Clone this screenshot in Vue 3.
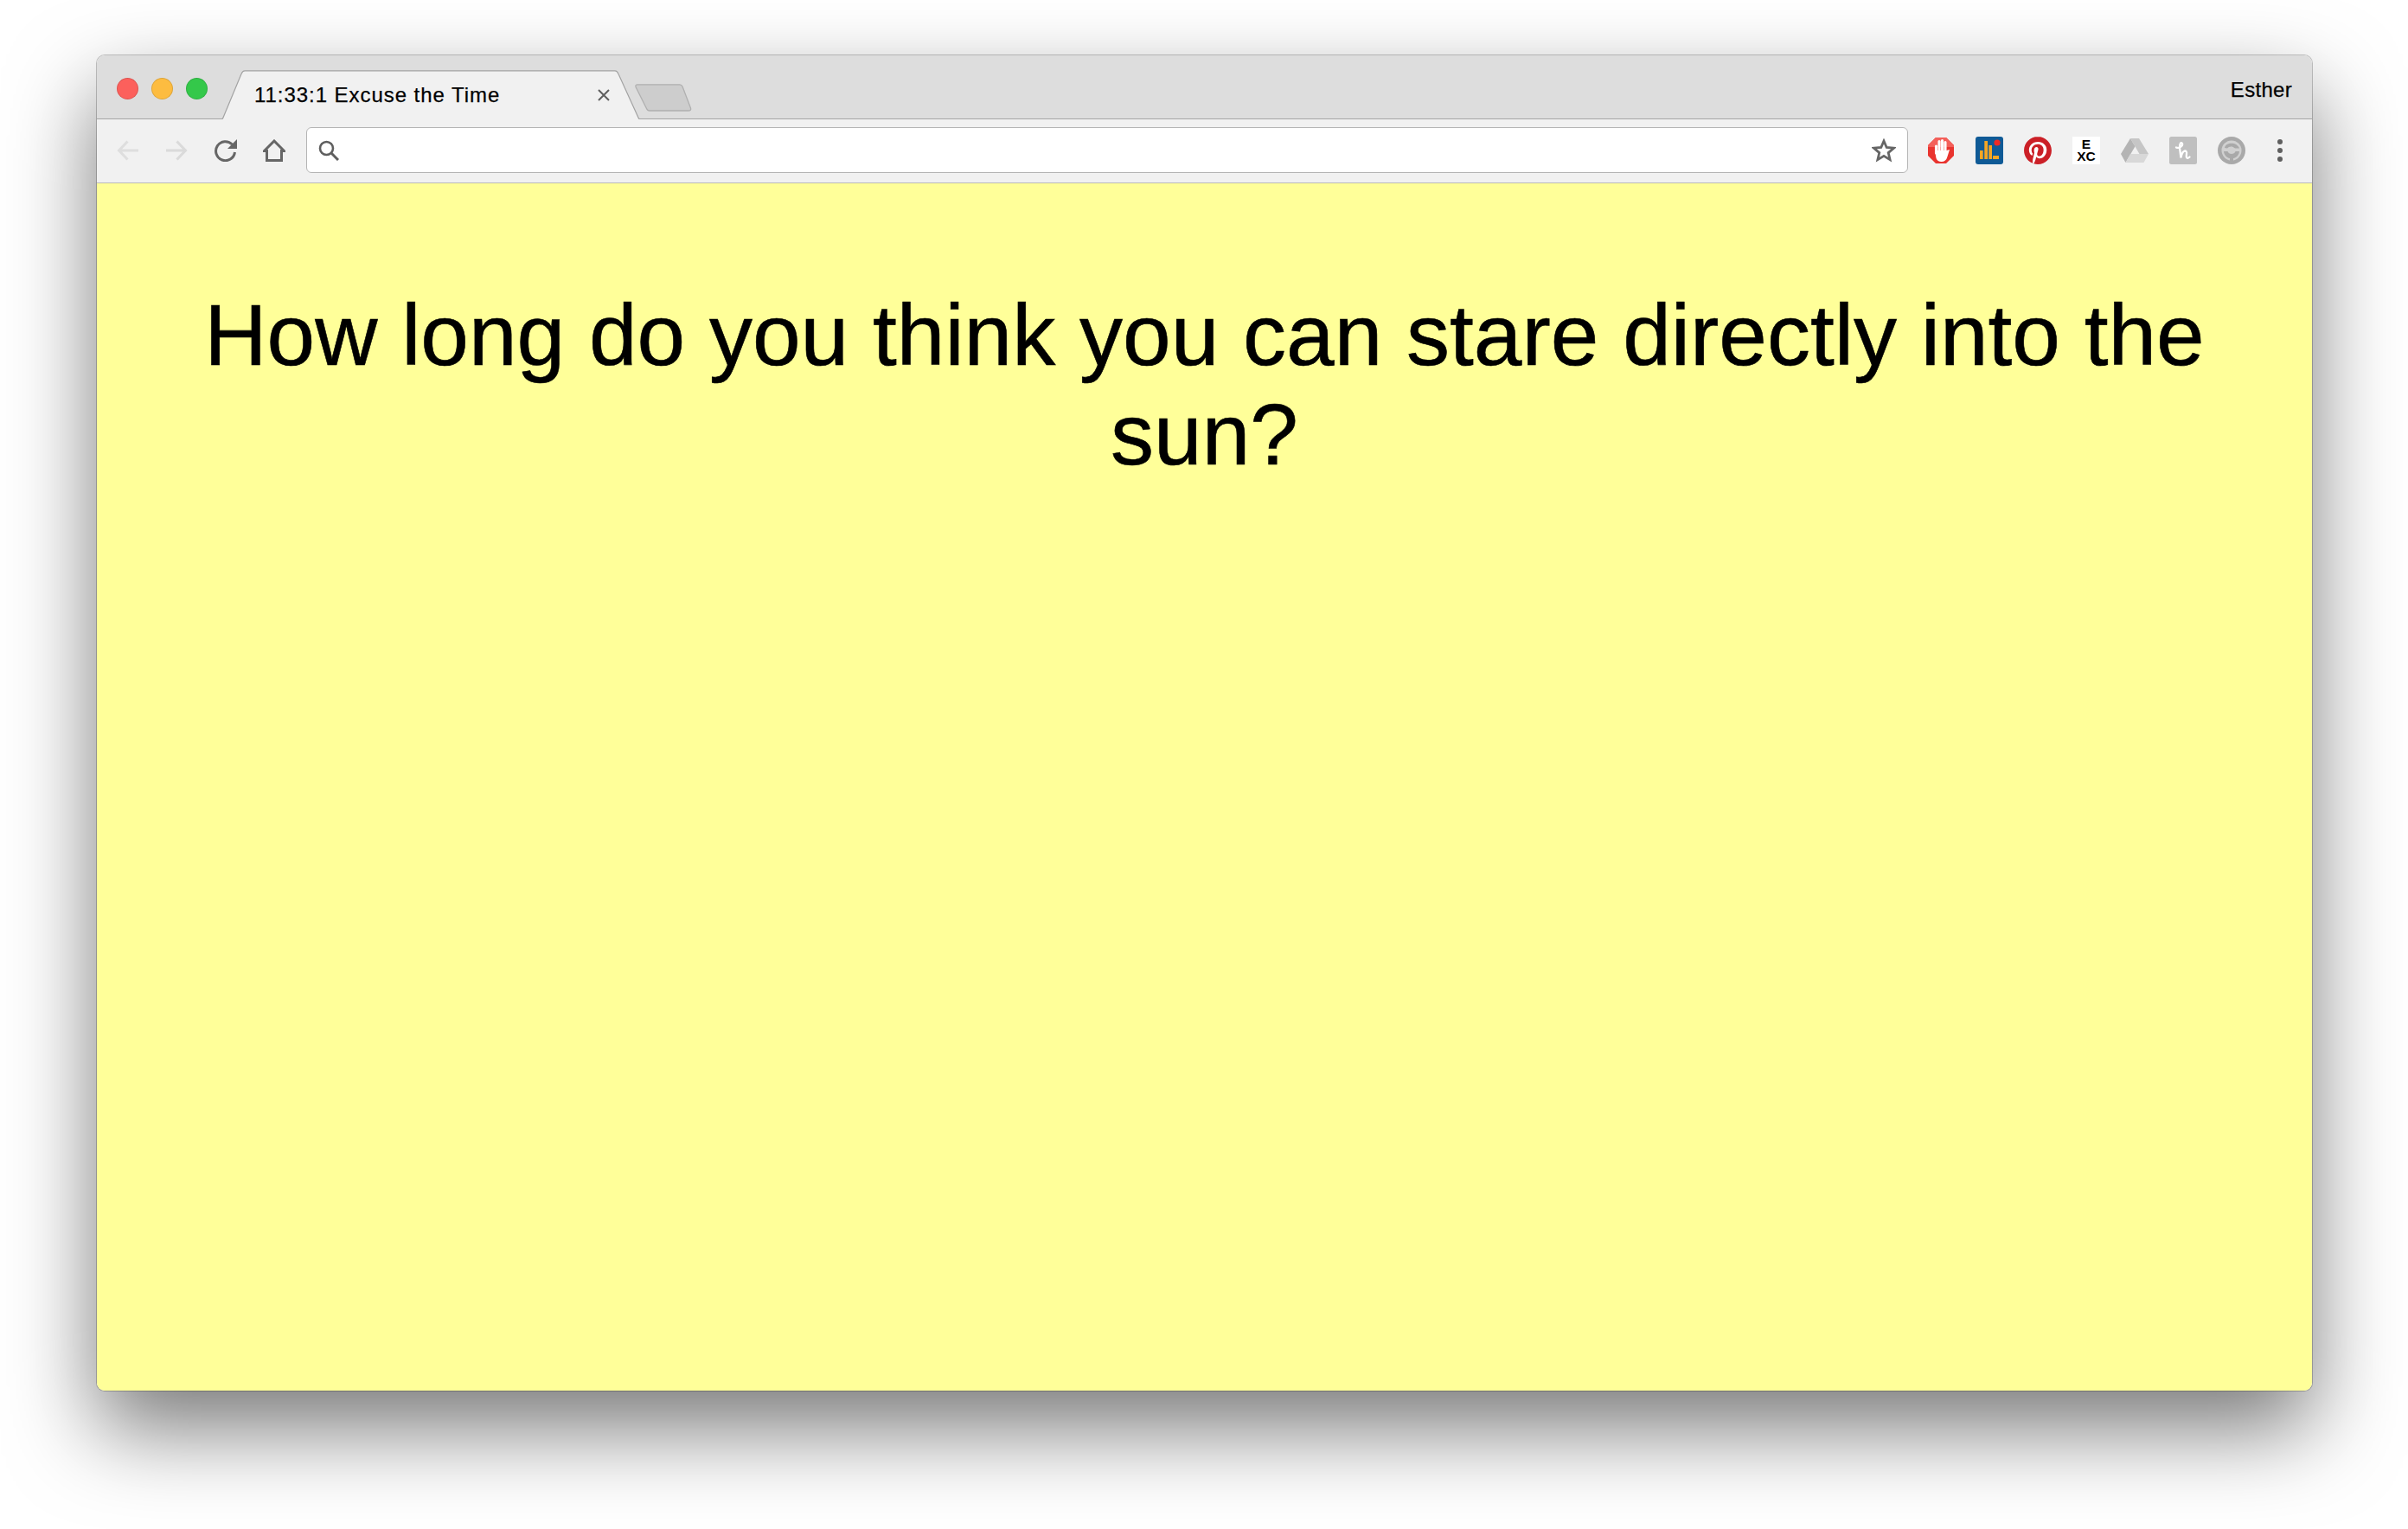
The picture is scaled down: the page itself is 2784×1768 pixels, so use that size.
<script setup>
const title = '11:33:1 Excuse the Time'
const question = 'How long do you think you can stare directly into the sun?'
</script>

<template>
  <div class="stage">
    <div class="window">
      <div class="strip">
        <div class="lights">
          <span class="light red"></span>
          <span class="light amber"></span>
          <span class="light green"></span>
        </div>
        <div class="tab">
          <svg class="tab-shape" width="484" height="57" viewBox="0 0 484 57">
            <path d="M0 56.500 H.5 Q1.500 56.500 2 55 L23 4.500 Q24.500 .8 27 .8 H455 Q457.500 .8 459 4.500 L482 55 Q482.500 56.500 483.500 56.500 H484 V57 H0 Z" fill="#f1f1f1" />
            <path d="M0 56.500 H.5 Q1.500 56.500 2 55 L23 4.500 Q24.500 .8 27 .8 H455 Q457.500 .8 459 4.500 L482 55 Q482.500 56.500 483.500 56.500 H484" fill="none" stroke="#a3a3a3" stroke-width="1.200" />
          </svg>
          <span class="tab-title">{{ title }}</span>
          <svg class="tab-close" width="16" height="14" viewBox="0 0 16 14">
            <path d="M2 1 L14 13 M14 1 L2 13" stroke="#5f5f5f" stroke-width="2" fill="none" />
          </svg>
        </div>
        <svg class="new-tab" width="66" height="32" viewBox="0 0 66 32">
          <path d="M3 .8 H52 Q54 .8 55 3 L64.500 28 Q65.300 31 62 31 H17 Q14.500 31 13.500 28.500 L1 3.500 Q.5 .8 3 .8 Z" fill="#cdcdcd" stroke="#b0b0b0" stroke-width="1.300" />
        </svg>
        <span class="profile">Esther</span>
      </div>

      <div class="toolbar">
        <svg class="nav" width="26" height="26" viewBox="0 0 26 26">
          <path d="M25 13 H3 M12.500 2.500 L2.500 13 L12.500 23.500" stroke="#dedede" stroke-width="3" fill="none" />
        </svg>
        <svg class="nav" width="26" height="26" viewBox="0 0 26 26">
          <path d="M1 13 H23 M13.500 2.500 L23.500 13 L13.500 23.500" stroke="#dadada" stroke-width="3" fill="none" />
        </svg>
        <svg class="nav" width="27" height="26" viewBox="0 0 27 26">
          <path d="M21.500 6 A11 11 0 1 0 24.500 15" stroke="#666" stroke-width="3" fill="none" />
          <path d="M27 0 V11 H16 Z" fill="#666" />
        </svg>
        <svg class="nav" width="26" height="26" viewBox="0 0 26 26">
          <path d="M1.500 13.500 L13 2 L24.500 13.500 H21.500 V24.500 H4.500 V13.500 Z" stroke="#666" stroke-width="3" fill="none" stroke-linejoin="miter" />
        </svg>

        <div class="omnibox">
          <svg width="24" height="24" viewBox="0 0 24 24">
            <circle cx="9.500" cy="9.500" r="7.500" stroke="#5f5f5f" stroke-width="2.600" fill="none" />
            <path d="M15 15 L23 23" stroke="#5f5f5f" stroke-width="3" fill="none" />
          </svg>
          <svg width="28" height="28" viewBox="0 0 28 28">
            <path d="M14 3 L17.200 10.500 L25.500 11.200 L19.200 16.600 L21.100 24.700 L14 20.400 L6.900 24.700 L8.800 16.600 L2.500 11.200 L10.800 10.500 Z" stroke="#666" stroke-width="2.800" fill="none" />
          </svg>
        </div>

        <div class="extensions">
          <svg width="32" height="32" viewBox="0 0 32 32">
            <path d="M10 1 H22 L31 10 V22 L22 31 H10 L1 22 V10 Z" fill="#e9342f" />
            <path d="M10 1 H22 L31 10 V12 H1 V10 Z" fill="#f4605a" />
            <path d="M10.500 11 V19 M14 5.500 V17 M17.500 4.500 V17 M21 6.500 V18" stroke="#fff" stroke-width="3.100" stroke-linecap="round" fill="none" />
            <path d="M9 16 H22.500 L26 15 L23.500 23 Q22 29 16.500 29 Q12 29 10.500 25 Z" fill="#fff" />
          </svg>
          <svg width="32" height="32" viewBox="0 0 32 32">
            <rect width="32" height="32" rx="3" fill="#0f5a96" />
            <path d="M5 16 H8.700 V26 H5 Z M10.300 5 H14 V26 H10.300 Z M15.300 10 H19 V26 H15.300 Z M20 22 H27 V26 H20 Z" fill="#f5a623" />
            <circle cx="25" cy="7" r="3.600" fill="#ee2a24" />
          </svg>
          <svg width="32" height="32" viewBox="0 0 24 24">
            <circle cx="12" cy="12" r="11.500" fill="#fff" />
            <path d="M12.017 0C5.396 0 .029 5.367.029 11.987c0 5.079 3.158 9.417 7.618 11.162-.105-.949-.199-2.403.041-3.439.219-.937 1.406-5.957 1.406-5.957s-.359-.72-.359-1.781c0-1.663.967-2.911 2.168-2.911 1.024 0 1.518.769 1.518 1.688 0 1.029-.653 2.567-.992 3.992-.285 1.193.6 2.165 1.775 2.165 2.128 0 3.768-2.245 3.768-5.487 0-2.861-2.063-4.869-5.008-4.869-3.41 0-5.409 2.562-5.409 5.199 0 1.033.394 2.143.889 2.741.099.12.112.225.085.345-.09.375-.293 1.199-.334 1.363-.053.225-.172.271-.401.165-1.495-.69-2.433-2.878-2.433-4.646 0-3.776 2.748-7.252 7.92-7.252 4.158 0 7.392 2.967 7.392 6.923 0 4.135-2.607 7.462-6.233 7.462-1.214 0-2.354-.629-2.758-1.379l-.749 2.848c-.269 1.045-1.004 2.352-1.498 3.146 1.123.345 2.306.535 3.55.535 6.607 0 11.985-5.365 11.985-11.987C23.97 5.39 18.592.026 11.985.026L12.017 0z" fill="#cb2027" />
          </svg>
          <div class="exc"><span>E</span><span>XC</span></div>
          <svg width="32" height="32" viewBox="0 -2 32 32">
            <path d="M11 0 L0 18 L5.500 28 L16.500 9.300 Z" fill="#b4b4b4" />
            <path d="M11 0 H21 L32 18 H21.500 Z" fill="#c6c6c6" />
            <path d="M11 18 H32 L26.500 28 H5.500 Z" fill="#d8d8d8" />
          </svg>
          <svg width="32" height="32" viewBox="0 0 32 32">
            <rect width="32" height="32" rx="2.500" fill="#bfbfbf" />
            <path d="M8 12.500 C11.500 14 16 10.500 15 8 C14 6 11.500 7.500 12 13 L13.500 24.500 C14 19 17 15 19.500 17 C21.200 18.500 19 22 20 24 C20.600 25.300 22 25 23.500 23.500" stroke="#fff" stroke-width="2.300" fill="none" stroke-linecap="round" />
          </svg>
          <svg width="32" height="32" viewBox="0 0 32 32">
            <circle cx="16" cy="16" r="16" fill="#a9a9a9" />
            <circle cx="16" cy="16" r="11.500" fill="#d0d0d0" />
            <path d="M8 13 C9 6.500 22 5.500 25 13.500 H20 C17 10.500 13 11 11 13.500 Z" fill="#a9a9a9" />
            <path d="M7 17 H11.500 C12.500 21 19.500 21 20.500 17 H25 C24.500 22 21 24.500 18 25 V30 H14 V25 C11 24.500 7.500 22 7 17 Z" fill="#a9a9a9" />
          </svg>
          <svg width="32" height="32" viewBox="0 0 32 32">
            <circle cx="16" cy="6" r="3" fill="#5f5f5f" />
            <circle cx="16" cy="16" r="3" fill="#5f5f5f" />
            <circle cx="16" cy="26" r="3" fill="#5f5f5f" />
          </svg>
        </div>
      </div>

      <main class="page">
        <h1>{{ question }}</h1>
      </main>
    </div>
  </div>
</template>

<style>
html, body { margin: 0; background: #fff; }
</style>

<style scoped>
.stage {
  width: 2784px;
  height: 1768px;
  box-sizing: border-box;
  padding: 64px 111px 160px 112px;
  overflow: hidden;
  background: #fff;
  font-family: "Liberation Sans", Arial, sans-serif;
  color: #000;
}
.window {
  height: 1544px;
  display: flex;
  flex-direction: column;
  border-radius: 9px;
  overflow: hidden;
  box-shadow: 0 0 0 1px rgba(0, 0, 0, .22), 0 44px 100px rgba(0, 0, 0, .53);
}
.strip {
  height: 74px;
  box-sizing: border-box;
  flex: none;
  display: flex;
  align-items: flex-end;
  background: #dddddd;
  border-bottom: 1px solid #a5a5a5;
}
.lights {
  align-self: flex-start;
  display: flex;
  gap: 15px;
  margin: 26px 0 0 23px;
}
.light {
  width: 25px;
  height: 25px;
  box-sizing: border-box;
  border-radius: 50%;
  border: 1px solid rgba(0, 0, 0, .12);
}
.red { background: #fc605c; }
.amber { background: #fdbc40; }
.green { background: #34c84a; }
.tab {
  position: relative;
  width: 484px;
  height: 57px;
  margin: 0 0 -1px 16px;
  flex: none;
  display: flex;
  align-items: center;
  padding: 1px 34px 0 38px;
  box-sizing: border-box;
}
.tab-shape {
  position: absolute;
  left: 0;
  top: 0;
}
.tab-title {
  position: relative;
  flex: 1;
  font-size: 24px;
  letter-spacing: .95px;
  line-height: 56px;
  white-space: nowrap;
  -webkit-text-stroke: .25px #000;
}
.tab-close { position: relative; }
.new-tab {
  flex: none;
  margin: 0 0 8px -6px;
}
.profile {
  align-self: flex-start;
  margin: 25px 23px 0 auto;
  font-size: 24px;
  letter-spacing: .3px;
  line-height: 30px;
  -webkit-text-stroke: .25px #000;
}
.toolbar {
  height: 74px;
  box-sizing: border-box;
  flex: none;
  display: flex;
  align-items: center;
  gap: 30px;
  padding: 0 21px 2px 23px;
  background: #f1f1f1;
  border-bottom: 1px solid #b9b9b9;
}
.nav { flex: none; }
.nav + .omnibox { margin-left: -6px; }
.omnibox {
  flex: 1;
  height: 53px;
  box-sizing: border-box;
  display: flex;
  align-items: center;
  justify-content: space-between;
  padding: 0 13px;
  background: #fff;
  border: 1px solid #b5b5b5;
  border-radius: 6px;
}
.extensions {
  flex: none;
  display: flex;
  align-items: center;
  gap: 24px;
  margin-left: -8px;
}
.exc {
  width: 32px;
  height: 32px;
  background: #fff;
  display: flex;
  flex-direction: column;
  align-items: center;
  justify-content: center;
  font-size: 15.5px;
  font-weight: 700;
  line-height: 13.500px;
}
.page {
  flex: 1;
  background: #ffff99;
  padding: 118px 40px 0;
}
h1 {
  margin: 0;
  font-size: 100px;
  font-weight: 400;
  line-height: 115px;
  text-align: center;
  -webkit-text-stroke: .6px #000;
}
</style>
